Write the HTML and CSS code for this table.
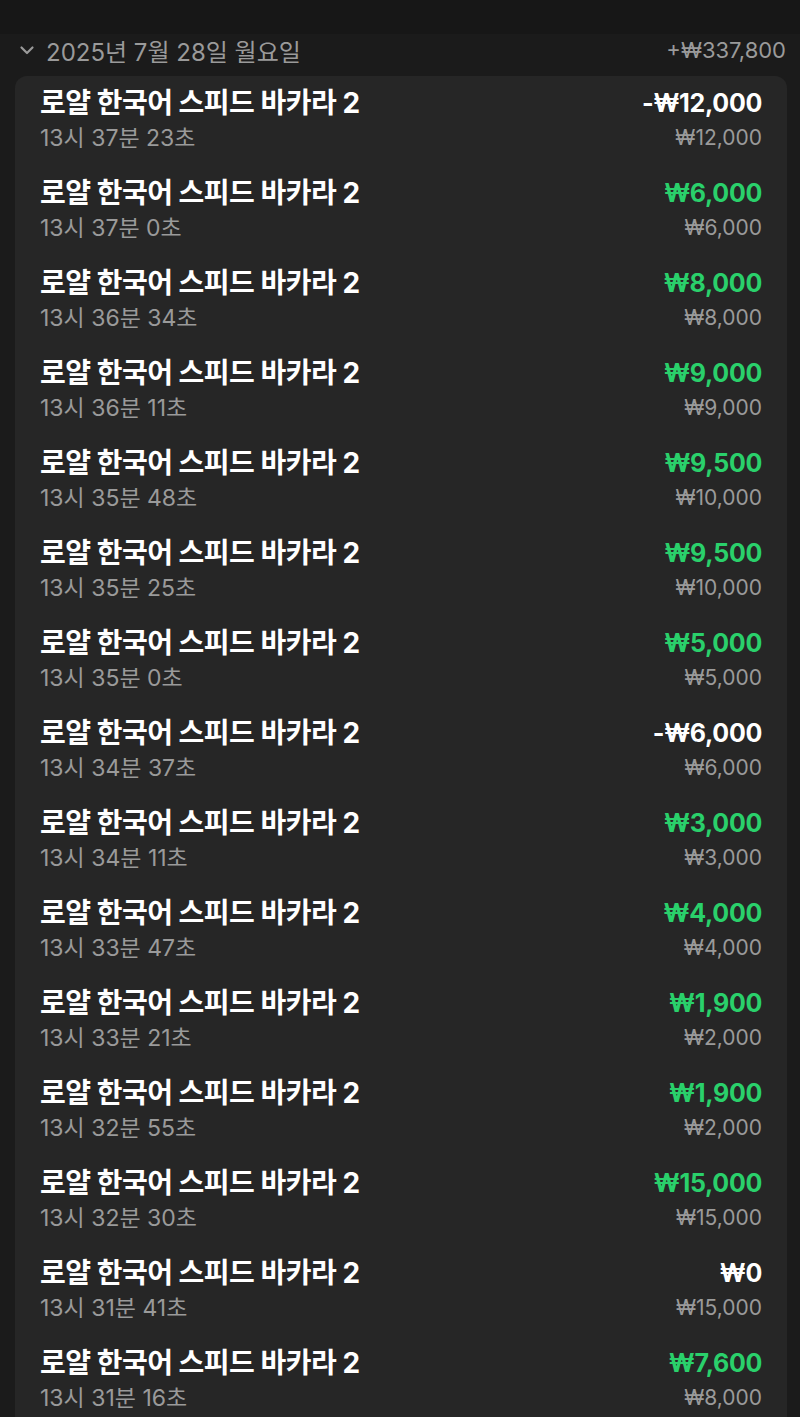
FILE: index.html
```html
<!DOCTYPE html>
<html lang="ko">
<head>
  <meta charset="UTF-8">
  <meta name="viewport" content="width=device-width, initial-scale=1.0">
  <title>베팅 내역</title>
  <link rel="stylesheet" href="styles.css">
</head>
<body>
  <div class="topbar"></div>

  <div class="day-head">
    <div class="day-title">
      <svg class="chevron" width="18" height="18" viewBox="0 0 18 18"><path d="M3.5 6.5 L9 12 L14.5 6.5" fill="none" stroke="#9a9a9a" stroke-width="2.2" stroke-linecap="round" stroke-linejoin="round"/></svg>
      <span>2025년 7월 28일 월요일</span>
    </div>
    <div class="day-total">+₩337,800</div>
  </div>

  <div class="card" id="betList"></div>

  <script>
    const bets = [
      { time: "13시 37분 23초", result: "-₩12,000", stake: "₩12,000", win: false },
      { time: "13시 37분 0초", result: "₩6,000", stake: "₩6,000", win: true },
      { time: "13시 36분 34초", result: "₩8,000", stake: "₩8,000", win: true },
      { time: "13시 36분 11초", result: "₩9,000", stake: "₩9,000", win: true },
      { time: "13시 35분 48초", result: "₩9,500", stake: "₩10,000", win: true },
      { time: "13시 35분 25초", result: "₩9,500", stake: "₩10,000", win: true },
      { time: "13시 35분 0초", result: "₩5,000", stake: "₩5,000", win: true },
      { time: "13시 34분 37초", result: "-₩6,000", stake: "₩6,000", win: false },
      { time: "13시 34분 11초", result: "₩3,000", stake: "₩3,000", win: true },
      { time: "13시 33분 47초", result: "₩4,000", stake: "₩4,000", win: true },
      { time: "13시 33분 21초", result: "₩1,900", stake: "₩2,000", win: true },
      { time: "13시 32분 55초", result: "₩1,900", stake: "₩2,000", win: true },
      { time: "13시 32분 30초", result: "₩15,000", stake: "₩15,000", win: true },
      { time: "13시 31분 41초", result: "₩0", stake: "₩15,000", win: false },
      { time: "13시 31분 16초", result: "₩7,600", stake: "₩8,000", win: true }
    ];

    const list = document.getElementById("betList");
    bets.forEach(bet => {
      const row = document.createElement("div");
      row.classList.add("row");
      row.innerHTML = `
        <div class="left">
          <div class="game">로얄 한국어 스피드 바카라 2</div>
          <div class="time">${bet.time}</div>
        </div>
        <div class="right">
          <div class="result ${bet.win ? "win" : ""}">${bet.result}</div>
          <div class="stake">${bet.stake}</div>
        </div>
      `;
      list.appendChild(row);
    });
  </script>
</body>
</html>
```

FILE: styles.css
```css
body {
  margin: 0;
  padding: 0;
  background-color: #1b1b1b;
  font-family: Inter, "Noto Sans CJK KR", sans-serif;
  color: white;
  overflow: hidden;
}

.topbar {
  height: 34px;
  background-color: #171717;
}

.day-head {
  display: flex;
  justify-content: space-between;
  align-items: center;
  padding: 0 14px 0 18px;
  height: 32px;
}

.day-title {
  display: flex;
  align-items: center;
  gap: 10px;
  color: #9a9a9a;
  font-size: 24px;
}

.day-total {
  color: #9a9a9a;
  font-size: 22px;
}

.card {
  margin: 10px 13px 0 15px;
  background-color: #262626;
  border-radius: 12px;
  padding: 12px 25px 0 25px;
}

.row {
  display: flex;
  justify-content: space-between;
  padding-bottom: 25px;
}

.game {
  font-size: 28px;
  font-weight: bold;
  line-height: 30px;
  letter-spacing: -0.5px;
}

.result {
  font-size: 25px;
  font-weight: bold;
  line-height: 30px;
  letter-spacing: -0.3px;
}

.time,
.stake {
  color: #9a9a9a;
  line-height: 30px;
  margin-top: 5px;
}

.time {
  font-size: 23px;
}

.stake {
  font-size: 21px;
}

.right {
  text-align: right;
}

.result {
  color: white;
}

.result.win {
  color: #2ad06b;
}
```
